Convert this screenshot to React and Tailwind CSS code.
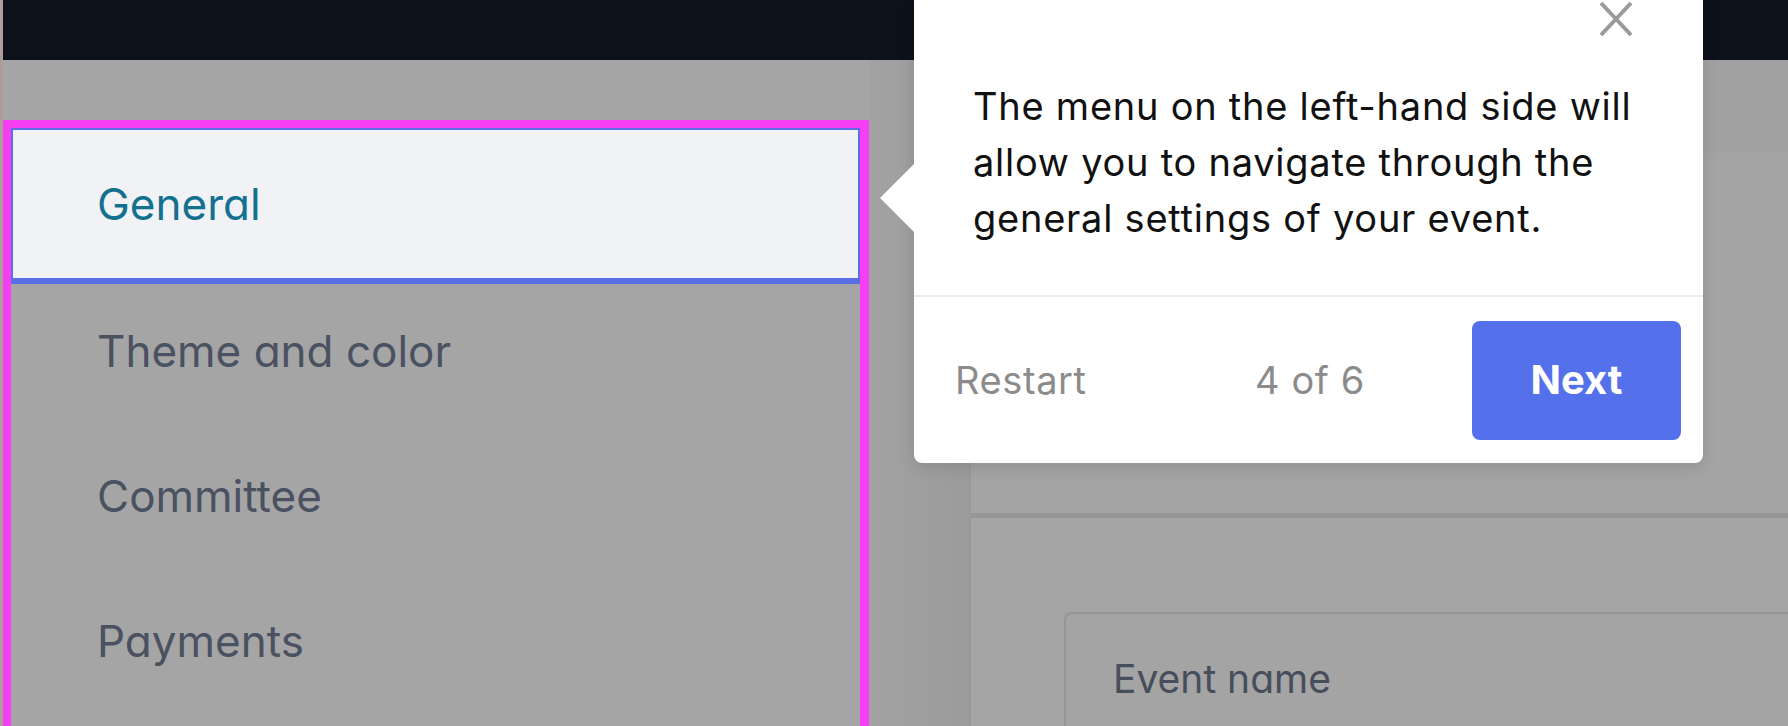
import React from "react";

const navFont = { fontFamily: "Inter, 'Noto Sans', sans-serif" };

function CloseIcon() {
  return (
    <svg width="34" height="36" viewBox="0 0 34 36" className="block">
      <path d="M2 2 L32 34 M32 2 L2 34" stroke="#9a9a9a" strokeWidth="4" strokeLinecap="butt" />
    </svg>
  );
}

function NavItem({ label }) {
  return (
    <div className="h-[145px] flex items-center pl-[86px]">
      <span className="text-[44px] leading-none text-[#4a5161] [font-feature-settings:'cv11'_1]" style={navFont}>
        {label}
      </span>
    </div>
  );
}

export default function App() {
  return (
    <div className="relative w-[1788px] h-[726px] overflow-hidden bg-[#a5a5a5] flex">
      {/* left edge strip */}
      <div className="w-[3px] h-full bg-[#ae9c9b] shrink-0" />

      <div className="flex-1 flex flex-col">
        {/* header */}
        <div className="h-[60px] bg-[#0c111b] shrink-0" />

        <div className="flex-1 flex">
          {/* sidebar */}
          <div className="w-[866px] shrink-0 flex flex-col pt-[60px]">
            <div className="flex-1 border-[8px] border-[#f63ff4] border-r-[9px] flex flex-col">
              <div className="relative z-10 h-[150px] bg-[#f1f2f6] border-t-2 border-x-2 border-[#5a6fe6] shadow-[0_6px_0_#5a6fe6] flex items-center pl-[84px]">
                <span className="text-[44px] leading-none text-[#13718f] [font-feature-settings:'cv11'_1]" style={navFont}>
                  General
                </span>
              </div>
              <NavItem label="Theme and color" />
              <NavItem label="Committee" />
              <NavItem label="Payments" />
            </div>
          </div>

          {/* gap shadow column */}
          <div className="w-[100px] shrink-0 bg-gradient-to-r from-[#a2a2a2] to-[#9b9b9b]" />

          {/* main content */}
          <div className="flex-1 flex flex-col border-l-2 border-[#9a9a9a]">
            <div className="h-[93px] bg-[#a1a1a1] shrink-0" />
            <div className="h-[365px] bg-[#a4a4a4] shrink-0 border-b-[5px] border-[#979797]" />
            <div className="flex-1 bg-[#a5a5a5] pl-[93px] pt-[94px]">
              <div className="h-[200px] rounded-tl-[8px] border-l-2 border-t-2 border-[#959595] bg-[#a4a4a4] pl-[47px] pt-[45px]">
                <span className="text-[39px] leading-none text-[#474e5b] [font-feature-settings:'cv11'_1]" style={navFont}>
                  Event name
                </span>
              </div>
            </div>
          </div>
        </div>
      </div>

      {/* tour tooltip */}
      <div
        className="absolute left-[914px] top-0 w-[789px] h-[463px] bg-white rounded-b-[8px] shadow-[0_4px_16px_rgba(0,0,0,0.12)] flex flex-col"
        style={{ fontFamily: "Inter, 'Liberation Sans', sans-serif" }}
      >
        <div className="absolute left-[-24px] top-[174px] w-[48px] h-[48px] bg-white rotate-45" />
        <div className="relative flex justify-end pr-[70px] pt-[1px] h-[78px]">
          <CloseIcon />
        </div>
        <p className="relative pl-[59px] pr-[20px] text-[38px] leading-[56px] tracking-[0.75px] text-[#111111]">
          The menu on the left-hand side will allow you to navigate through the general settings of your event.
        </p>
        <div className="mt-auto h-[2px] bg-[#ececec]" />
        <div className="h-[166px] flex items-center pl-[41px] pr-[22px]">
          <span className="w-[300px] text-[38px] tracking-[0.6px] text-[#8b8b8b]">Restart</span>
          <span className="text-[38px] tracking-[0.6px] text-[#8b8b8b]">4 of 6</span>
          <button className="ml-auto w-[209px] h-[119px] rounded-[8px] bg-[#5570eb] text-white text-[40px] font-bold">
            Next
          </button>
        </div>
      </div>
    </div>
  );
}
